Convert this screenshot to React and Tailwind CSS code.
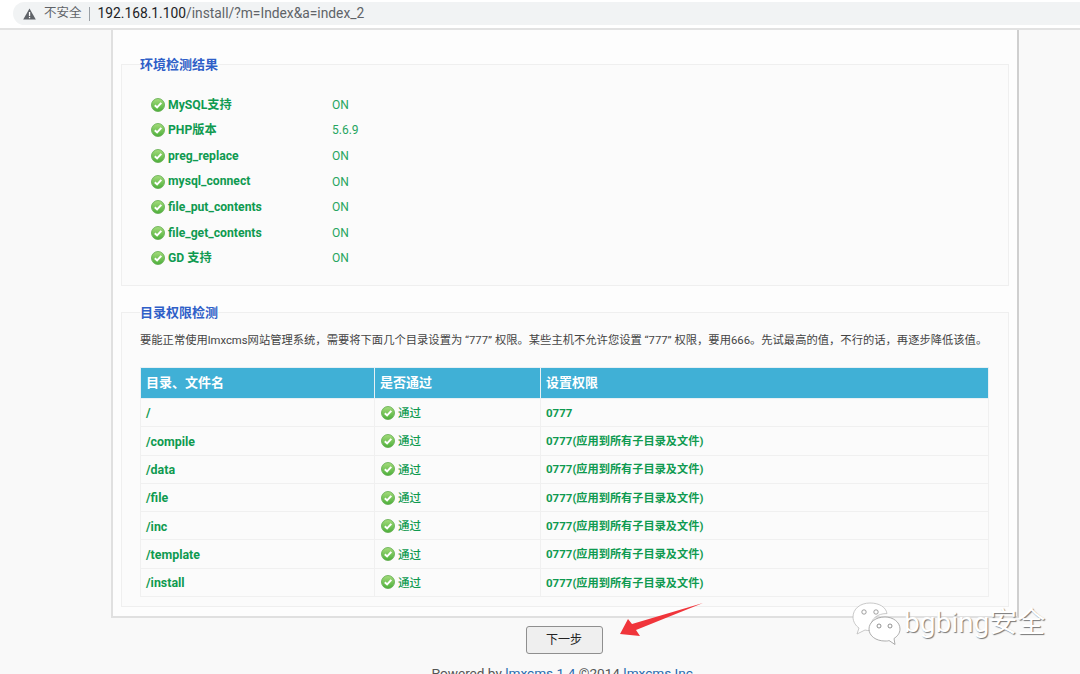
import React from 'react';

const FONT = 'font-["Roboto","Noto_Sans_CJK_SC",sans-serif]';

const envRows = [
  ['MySQL支持', 'ON'],
  ['PHP版本', '5.6.9'],
  ['preg_replace', 'ON'],
  ['mysql_connect', 'ON'],
  ['file_put_contents', 'ON'],
  ['file_get_contents', 'ON'],
  ['GD 支持', 'ON'],
];

const ALL = '(应用到所有子目录及文件)';
const dirRows = [
  ['/', ''],
  ['/compile', ALL],
  ['/data', ALL],
  ['/file', ALL],
  ['/inc', ALL],
  ['/template', ALL],
  ['/install', ALL],
];

function CheckIcon() {
  return (
    <svg width="14" height="14" viewBox="0 0 14 14" className="shrink-0">
      <defs>
        <linearGradient id="okGrad" x1="0" y1="0" x2="0" y2="1">
          <stop offset="0" stopColor="#a5dc7c" />
          <stop offset="1" stopColor="#4caf3a" />
        </linearGradient>
      </defs>
      <circle cx="7" cy="7" r="6.5" fill="url(#okGrad)" stroke="#5da94a" strokeWidth="0.8" />
      <path d="M3.8 7.2 L6.1 9.4 L10.3 4.9" fill="none" stroke="#fff" strokeWidth="2" />
    </svg>
  );
}

function WarnIcon() {
  return (
    <svg width="13" height="12" viewBox="0 0 13 12" className="shrink-0">
      <path d="M6.5 0.5 L12.8 11.5 L0.2 11.5 Z" fill="#5f6368" />
      <rect x="5.9" y="4" width="1.3" height="4" fill="#fff" />
      <rect x="5.9" y="8.9" width="1.3" height="1.3" fill="#fff" />
    </svg>
  );
}

function Bubbles() {
  return (
    <svg width="50" height="44" viewBox="0 0 50 44">
      <path d="M19 1C9 1 2 7 2 15c0 5 3 9 6 11l-2 6 8-4c2 .5 3 .6 5 .6h2c-1-2-1-3-1-5 0-7 7-12 15-12h1C35 5 28 1 19 1z" fill="#fff" stroke="#bbb" strokeWidth="0.8" />
      <circle cx="13" cy="10" r="2.2" fill="#fff" stroke="#888" strokeWidth="0.8" />
      <circle cx="25" cy="10" r="2.2" fill="#fff" stroke="#888" strokeWidth="0.8" />
      <path d="M34 15c-9 0-16 5-16 12s7 12 16 12c2 0 3 0 4-.5l6 4-1-6c3-2 6-5 6-9.500 0-7-7-12-15-12z" fill="#fff" stroke="#999" strokeWidth="0.8" />
      <circle cx="28" cy="24" r="2" fill="#fff" stroke="#777" strokeWidth="0.8" />
      <circle cx="39" cy="24" r="2" fill="#fff" stroke="#777" strokeWidth="0.8" />
    </svg>
  );
}

export default function App() {
  return (
    <div className={`relative h-[674px] overflow-hidden bg-[#f9f9f9] ${FONT}`}>
      <div className="h-[30px] bg-white border-b-2 border-[#e2e2e2] pt-[2px] pl-[13px]">
        <div className="flex h-[23px] items-center rounded-l-full bg-[#f1f3f4] pl-[10px]">
          <WarnIcon />
          <span className="ml-[8px] text-[12.5px] text-[#5f6368]">不安全</span>
          <span className="ml-[7px] h-[14px] w-px bg-[#9aa0a6]" />
          <span className="ml-[8px] text-[13.8px] text-[#5f6368]">
            <span className="text-[#202124]">192.168.1.100</span>/install/?m=Index&amp;a=index_2
          </span>
        </div>
      </div>

      <div className="ml-[111px] h-[588px] w-[908px] border-x-2 border-b-2 border-[#e0e0e0] border-r-[#cfcfcf] bg-[#fdfdfd] px-[8px] pt-[26px]">
        <fieldset className="h-[230px] border border-[#efefef] bg-[#fbfbfb] px-[18px] pt-[20px]">
          <legend className="translate-y-[1px] text-[13px] font-bold leading-[16px] text-[#2f5fc8]">环境检测结果</legend>
          <div className="pl-[11px]">
            {envRows.map(([name, val]) => (
              <div key={name} className="flex h-[25.6px] items-center">
                <CheckIcon />
                <span className="ml-[3px] w-[164px] text-[12.2px] font-bold text-[#0f9a50]">{name}</span>
                <span className="text-[12px] text-[#25a560]">{val}</span>
              </div>
            ))}
          </div>
        </fieldset>

        <fieldset className="mt-[18px] h-[303px] border border-[#efefef] bg-[#fbfbfb] px-[18px]">
          <legend className="translate-y-[1px] text-[13px] font-bold leading-[16px] text-[#2f5fc8]">目录权限检测</legend>
          <p className="mt-[11px] whitespace-nowrap text-[11.3px] leading-[20px] text-[#444]">
            要能正常使用lmxcms网站管理系统，需要将下面几个目录设置为 “777” 权限。某些主机不允许您设置 “777” 权限，要用666。先试最高的值，不行的话，再逐步降低该值。
          </p>
          <table className="mt-[16px] w-[848px] table-fixed border-collapse">
            <colgroup>
              <col className="w-[234px]" />
              <col className="w-[166px]" />
              <col className="w-[448px]" />
            </colgroup>
            <thead>
              <tr className="h-[31px] bg-[#40b0d6] text-left text-[13px] font-bold text-white">
                <th className="border border-[#e8f0f4] px-[5px]">目录、文件名</th>
                <th className="border border-[#e8f0f4] px-[5px]">是否通过</th>
                <th className="border border-[#e8f0f4] px-[5px]">设置权限</th>
              </tr>
            </thead>
            <tbody>
              {dirRows.map(([path, note]) => (
                <tr key={path} className="h-[28.3px] font-bold text-[#0f9a50]">
                  <td className="border border-[#f0f0f0] px-[5px] pt-[2px] text-[12.4px]">{path}</td>
                  <td className="border border-[#f0f0f0] px-[6px]">
                    <div className="flex items-center">
                      <CheckIcon />
                      <span className="ml-[3px] pt-[2px] text-[11.5px] font-medium">通过</span>
                    </div>
                  </td>
                  <td className="border border-[#f0f0f0] px-[5px] pt-[2px] text-[11.5px]">
                    0777<span className="text-[11.2px]">{note}</span>
                  </td>
                </tr>
              ))}
            </tbody>
          </table>
        </fieldset>
      </div>

      <div className="ml-[111px] flex w-[906px] flex-col items-center">
        <button className="mt-[8px] h-[28px] w-[77px] rounded-[3px] border border-[#8f8f8f] bg-[#efefef] text-[12px] text-[#222]">
          下一步
        </button>
        <p className="mt-[9px] whitespace-nowrap text-[13.6px] text-[#555]">
          Powered by <span className="text-[#2a6cb0]">lmxcms 1.4</span> ©2014 <span className="text-[#2a6cb0]">lmxcms Inc.</span>
        </p>
      </div>

      {/* red arrow drawn over the screenshot */}
      <svg className="absolute left-[615px] top-[598px]" width="95" height="42" viewBox="0 0 95 42">
        <path d="M5 36 L13 21 L17 26 L88 5 L21 32 L25 38 Z" fill="#f0353b" />
      </svg>

      {/* wechat watermark */}
      <div className="absolute left-[851px] top-[602px] flex items-center">
        <Bubbles />
        <span className="ml-[3px] -mt-[3px] text-[28px] leading-[36px] text-white [text-shadow:1px_1px_1px_#777]">bgbing安全</span>
      </div>
    </div>
  );
}
